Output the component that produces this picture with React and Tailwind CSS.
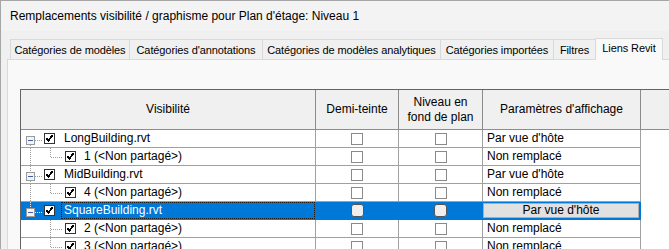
import React from "react";

const rows = [
  { type: "p", name: "LongBuilding.rvt", param: "Par vue d'hôte", up: false, down: true },
  { type: "c", name: "1 (<Non partagé>)", param: "Non remplacé", trunk: true, more: false },
  { type: "p", name: "MidBuilding.rvt", param: "Par vue d'hôte", up: true, down: true },
  { type: "c", name: "4 (<Non partagé>)", param: "Non remplacé", trunk: true, more: false },
  { type: "p", name: "SquareBuilding.rvt", param: "Par vue d'hôte", up: true, down: false, sel: true },
  { type: "c", name: "2 (<Non partagé>)", param: "Non remplacé", trunk: false, more: true },
  { type: "c", name: "3 (<Non partagé>)", param: "Non remplacé", trunk: false, more: false },
];

function TreeCheck({ x }) {
  return (
    <g>
      <rect x={x + 0.5} y={3.5} width={10} height={10} fill="#fff" stroke="#333" />
      <path d={`M${x + 2.5} ${8.5} L${x + 4.5} ${10.5} L${x + 8.5} ${5}`} stroke="#000" strokeWidth="1.8" fill="none" />
    </g>
  );
}

function ParentGlyph({ up, down, sel }) {
  const dot = sel ? "#e8f0ff" : "#a0a0a0";
  return (
    <svg width="40" height="17" className="shrink-0" shapeRendering="crispEdges">
      {up && <line x1="9.5" y1="0" x2="9.5" y2="6" stroke={dot} strokeDasharray="1 1" />}
      {down && <line x1="9.5" y1="15" x2="9.5" y2="17" stroke={dot} strokeDasharray="1 1" />}
      <line x1="14" y1="10.5" x2="22" y2="10.5" stroke={dot} strokeDasharray="1 1" />
      <rect x="5.5" y="6.5" width="8" height="8" fill="#f4f4f4" stroke="#9a9a9a" />
      <line x1="7" y1="10.5" x2="12" y2="10.5" stroke="#3b5fb0" />
      <TreeCheck x={23} />
    </svg>
  );
}

function ChildGlyph({ trunk, more }) {
  const dot = "#a0a0a0";
  return (
    <svg width="60" height="17" className="shrink-0" shapeRendering="crispEdges">
      {trunk && <line x1="9.5" y1="0" x2="9.5" y2="17" stroke={dot} strokeDasharray="1 1" />}
      <line x1="29.5" y1="0" x2="29.5" y2={more ? 17 : 10} stroke={dot} strokeDasharray="1 1" />
      <line x1="30" y1="9.5" x2="42" y2="9.5" stroke={dot} strokeDasharray="1 1" />
      <TreeCheck x={44} />
    </svg>
  );
}

function Box({ sel }) {
  if (sel)
    return <div className="w-[13px] h-[13px] rounded-[3px] border border-[#555] bg-[#efefef]" />;
  return <div className="w-[12px] h-[12px] border border-[#8a8a8a] bg-white" />;
}

const tabs = [
  { label: "Catégories de modèles", w: "w-[119px]" },
  { label: "Catégories d'annotations", w: "w-[133px]" },
  { label: "Catégories de modèles analytiques", w: "w-[178px]" },
  { label: "Catégories importées", w: "w-[113px]" },
  { label: "Filtres", w: "w-[42px]" },
];

export default function App() {
  return (
    <div className="w-[669px] h-[249px] overflow-hidden bg-[#f0f0f0] border-l border-t border-[#a6a6a6] font-['Liberation_Sans',Arial,sans-serif] text-[12px] text-black leading-[15px]">
      <div className="h-[30px] bg-[#f3f3f3] flex items-center pl-[9px] pt-[1px] whitespace-nowrap">
        Remplacements visibilité / graphisme pour Plan d'étage: Niveau 1
      </div>
      <div className="pl-[6px] pt-[7px]">
        <div className="flex items-end h-[22px] text-[11px] tracking-[-0.1px] whitespace-nowrap">
          <div className="w-[3px] h-[1px] bg-[#d9d9d9]" />
          {tabs.map((t) => (
            <div
              key={t.label}
              className={`${t.w} h-[21px] shrink-0 border-l border-t border-b border-[#d9d9d9] bg-[#f0f0f0] flex items-center justify-center pt-[1px] overflow-hidden`}
            >
              {t.label}
            </div>
          ))}
          <div className="w-[68px] h-[22px] shrink-0 border-l border-r border-t border-[#d9d9d9] bg-[#f9f9f9] flex items-center justify-center pb-[2px]">
            Liens Revit
          </div>
          <div className="flex-1 h-[1px] bg-[#d9d9d9]" />
        </div>
        <div className="h-[200px] bg-[#f9f9f9] border-l border-[#d9d9d9] pl-[12px] pt-[29px]">
          <div className="w-[660px] bg-white border-l border-t border-[#646464] whitespace-nowrap">
            <div className="flex h-[40px] bg-[#f0f0f0] border-b border-[#8c8c8c]">
              <div className="w-[295px] shrink-0 border-r border-[#8c8c8c] flex items-center justify-center">Visibilité</div>
              <div className="w-[83px] shrink-0 border-r border-[#8c8c8c] flex items-center justify-center">Demi-teinte</div>
              <div className="w-[84px] shrink-0 border-r border-[#8c8c8c] flex items-center justify-center text-center">
                Niveau en<br />fond de plan
              </div>
              <div className="w-[158px] shrink-0 border-r border-[#8c8c8c] flex items-center justify-center">Paramètres d'affichage</div>
              <div className="flex-1" />
            </div>
            {rows.map((r, i) => {
              const sel = !!r.sel;
              const cell = sel ? "bg-[#0078d7] border-[#0078d7]" : "border-[#a0a0a0]";
              return (
                <div key={i} className="flex h-[18px]">
                  <div className={`w-[295px] shrink-0 border-r border-b flex items-stretch ${cell}`}>
                    {r.type === "p" ? (
                      <ParentGlyph up={r.up} down={r.down} sel={sel} />
                    ) : (
                      <ChildGlyph trunk={r.trunk} more={r.more} />
                    )}
                    <div
                      className={`flex-1 flex items-center pl-[2px] border ${
                        sel ? "border-dotted border-[#1a1a1a] text-white" : "border-transparent"
                      }`}
                    >
                      {r.name}
                    </div>
                  </div>
                  <div className={`w-[83px] shrink-0 border-r border-b flex items-center justify-center ${cell}`}>
                    <Box sel={sel} />
                  </div>
                  <div className={`w-[84px] shrink-0 border-r border-b flex items-center justify-center ${cell}`}>
                    <Box sel={sel} />
                  </div>
                  <div className={`w-[158px] shrink-0 border-r border-b flex items-center ${sel ? "" : "pl-[4px]"} ${cell}`}>
                    {sel ? (
                      <div className="w-[156px] h-[15px] bg-[#e1e1e1] border border-[#adadad] flex items-center justify-center">
                        {r.param}
                      </div>
                    ) : (
                      r.param
                    )}
                  </div>
                  <div className="flex-1" />
                </div>
              );
            })}
          </div>
        </div>
      </div>
    </div>
  );
}
